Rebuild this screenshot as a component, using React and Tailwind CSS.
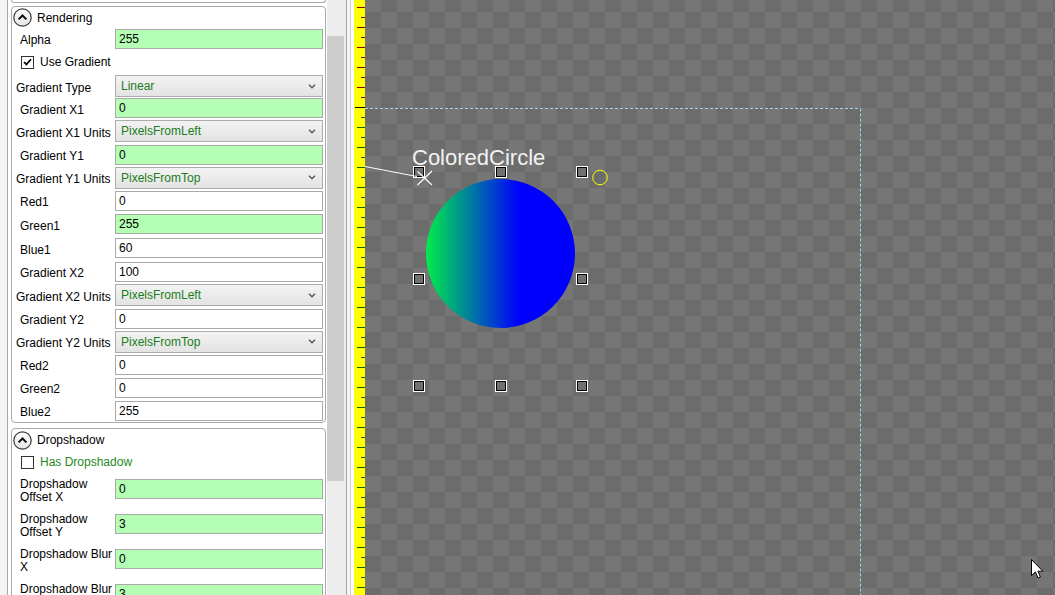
import React from "react";

function CircleChevron() {
  return (
    <svg width="19" height="19" viewBox="0 0 19 19" className="shrink-0">
      <defs>
        <linearGradient id="ccg" x1="0" y1="0" x2="0" y2="1">
          <stop offset="0" stopColor="#ffffff" />
          <stop offset="1" stopColor="#e6e6e6" />
        </linearGradient>
      </defs>
      <circle cx="9.5" cy="9.5" r="8.7" fill="url(#ccg)" stroke="#3a3a3a" strokeWidth="1.2" />
      <path d="M5.6 11.4 L9.5 7.5 L13.4 11.4" fill="none" stroke="#111" strokeWidth="2" />
    </svg>
  );
}

function Check({ checked }) {
  return (
    <span className="w-[13px] h-[13px] shrink-0 border border-[#333333] bg-white flex items-center justify-center">
      {checked && (
        <svg width="9" height="8" viewBox="0 0 9 8">
          <path d="M1 4 L3.4 6.4 L8 1.2" stroke="#000" strokeWidth="1.7" fill="none" />
        </svg>
      )}
    </span>
  );
}

function Field({ value, green }) {
  return (
    <div
      className={
        green
          ? "w-[208px] h-[20px] shrink-0 border border-[#a9a9a9] bg-[#b4ffb4] pl-[3px] flex items-center text-[12px] text-black"
          : "w-[208px] h-[20px] shrink-0 border border-[#a9a9a9] bg-white pl-[3px] flex items-center text-[12px] text-black"
      }
    >
      {value}
    </div>
  );
}

function Combo({ value }) {
  return (
    <div className="w-[208px] h-[22px] shrink-0 border border-[#acacac] bg-linear-to-b from-[#f3f3f3] to-[#e3e3e3] pl-[5px] pr-[6px] flex items-center justify-between text-[12px] text-[#1b7d1b]">
      <span>{value}</span>
      <svg width="8" height="5" viewBox="0 0 8 5">
        <path d="M1 0.8 L4 3.8 L7 0.8" stroke="#5a5a5a" strokeWidth="1.5" fill="none" />
      </svg>
    </div>
  );
}

const rows = [
  { h: "h-[21px]", label: "Alpha", value: "255", green: true },
  { h: "h-[26px]", check: true, label: "Use Gradient" },
  { h: "h-[22px]", label: "Gradient Type", combo: "Linear" },
  { h: "h-[22px]", label: "Gradient X1", value: "0", green: true },
  { h: "h-[24px]", label: "Gradient X1 Units", combo: "PixelsFromLeft" },
  { h: "h-[23px]", label: "Gradient Y1", value: "0", green: true },
  { h: "h-[23px]", label: "Gradient Y1 Units", combo: "PixelsFromTop" },
  { h: "h-[23px]", label: "Red1", value: "0" },
  { h: "h-[24px]", label: "Green1", value: "255", green: true },
  { h: "h-[24px]", label: "Blue1", value: "60" },
  { h: "h-[23px]", label: "Gradient X2", value: "100" },
  { h: "h-[24px]", label: "Gradient X2 Units", combo: "PixelsFromLeft" },
  { h: "h-[23px]", label: "Gradient Y2", value: "0" },
  { h: "h-[23px]", label: "Gradient Y2 Units", combo: "PixelsFromTop" },
  { h: "h-[23px]", label: "Red2", value: "0" },
  { h: "h-[23px]", label: "Green2", value: "0" },
  { h: "h-[23px]", label: "Blue2", value: "255" },
];

function PropRow({ r }) {
  if (r.check) {
    return (
      <div className={"flex items-center pl-[9px] gap-[6px] " + r.h}>
        <Check checked />
        <span className="text-[12px] text-black">{r.label}</span>
      </div>
    );
  }
  return (
    <div className={"flex items-center " + r.h}>
      <div
        className={
          r.combo
            ? "w-[103px] shrink-0 pl-[4px] pt-[3px] text-[12px] text-black whitespace-nowrap"
            : "w-[103px] shrink-0 pl-[8px] pt-[3px] text-[12px] text-black whitespace-nowrap"
        }
      >
        {r.label}
      </div>
      {r.combo ? <Combo value={r.combo} /> : <Field value={r.value} green={r.green} />}
    </div>
  );
}

function ShadowRow({ l1, l2, value }) {
  return (
    <div className="flex items-start h-[35px] shrink-0">
      <div className="w-[103px] shrink-0 pl-[8px] pt-[5px] text-[12px] leading-[13px] text-black whitespace-nowrap">
        {l1}
        <br />
        {l2}
      </div>
      <div className="mt-[6px]">
        <Field value={value} green />
      </div>
    </div>
  );
}

function Ruler() {
  const ticks = [];
  for (let y = 7; y < 600; y += 10) {
    const long = (y - 7) % 20 === 0;
    let color = y < 107 ? "#8b0000" : "#0b6400";
    let x1 = long ? 3 : 7;
    if (y === 107) {
      color = "#000000";
      x1 = 1;
    }
    ticks.push(<line key={y} x1={x1} x2="11" y1={y + 0.5} y2={y + 0.5} stroke={color} strokeWidth="1" />);
  }
  return (
    <svg width="11" height="595" viewBox="0 0 11 595" className="block">
      <rect x="0" y="0" width="11" height="595" fill="#ffff00" />
      {ticks}
    </svg>
  );
}

function Handle({ cx, cy }) {
  return (
    <g>
      <rect x={cx - 6} y={cy - 6} width="12" height="12" fill="#ffffff" />
      <rect x={cx - 5} y={cy - 5} width="10" height="10" fill="#000000" />
      <rect x={cx - 4} y={cy - 4} width="8" height="8" fill="#717171" />
    </g>
  );
}

export default function App() {
  const handles = [
    [54, 172], [136, 172], [217, 172],
    [54, 279], [217, 279],
    [54, 386], [136, 386], [217, 386],
  ];
  return (
    <div className="w-[1055px] h-[595px] overflow-hidden flex font-['Liberation_Sans',Arial,sans-serif] bg-[#f0f0f0]">
      {/* property panel */}
      <div className="w-[327px] h-full shrink-0 bg-[#f4f4f4] flex overflow-hidden">
        <div className="ml-[7px] flex-1 h-full border-l border-[#a8a8a8] bg-white pl-[3px] flex flex-col overflow-hidden">
          {/* previous group bottom */}
          <div className="w-[315px] h-[3px] shrink-0 border-l border-r border-b border-[#a9a9a9] rounded-b-[4px]" />
          {/* Rendering group */}
          <div className="w-[315px] mt-[3px] shrink-0 border border-[#a9a9a9] rounded-[4px] flex flex-col">
            <div className="h-[21px] flex items-center gap-[5px] pl-[1px]">
              <CircleChevron />
              <span className="text-[12px] text-black">Rendering</span>
            </div>
            {rows.map((r, i) => (
              <PropRow key={i} r={r} />
            ))}
          </div>
          {/* Dropshadow group */}
          <div className="w-[315px] mt-[5px] shrink-0 border border-[#a9a9a9] rounded-t-[4px] flex flex-col">
            <div className="h-[22px] flex items-center gap-[5px] pl-[1px]">
              <CircleChevron />
              <span className="text-[12px] text-black">Dropshadow</span>
            </div>
            <div className="h-[22px] flex items-center pl-[9px] gap-[6px]">
              <Check />
              <span className="text-[12px] text-[#1f8a1f]">Has Dropshadow</span>
            </div>
            <ShadowRow l1="Dropshadow" l2="Offset X" value="0" />
            <ShadowRow l1="Dropshadow" l2="Offset Y" value="3" />
            <ShadowRow l1="Dropshadow Blur" l2="X" value="0" />
            <ShadowRow l1="Dropshadow Blur" l2="Y" value="3" />
          </div>
        </div>
      </div>

      {/* scrollbar */}
      <div className="w-[17px] h-full shrink-0 bg-[#ededed] flex flex-col">
        <div className="h-[36px] shrink-0" />
        <div className="h-[445px] shrink-0 bg-[#cdcdcd]" />
      </div>

      {/* splitter */}
      <div className="w-[10px] h-full shrink-0 flex">
        <div className="w-[2px] bg-[#ececec]" />
        <div className="w-[1px] bg-[#a8a8a8]" />
        <div className="w-[3px] bg-[#f6f6f6]" />
        <div className="w-[1px] bg-[#cfcfcf]" />
        <div className="w-[3px] bg-white" />
      </div>

      {/* ruler */}
      <div className="w-[11px] h-full shrink-0">
        <Ruler />
      </div>

      {/* canvas */}
      <div className="relative flex-1 h-full overflow-hidden bg-[conic-gradient(#767676_25%,#6c6c6c_0_50%,#767676_0_75%,#6c6c6c_0)] bg-size-[32px_32px] bg-position-[0_12px]">
        <svg width="690" height="595" viewBox="0 0 690 595" className="absolute left-0 top-0">
          <defs>
            <linearGradient id="circGrad" gradientUnits="userSpaceOnUse" x1="54" y1="0" x2="154" y2="0">
              <stop offset="0" stopColor="#00ff3c" />
              <stop offset="1" stopColor="#0000ff" />
            </linearGradient>
          </defs>
          <line x1="0" y1="108.5" x2="495.5" y2="108.5" stroke="#9dd6ee" strokeWidth="1" strokeDasharray="3 2" />
          <line x1="495.5" y1="108.5" x2="495.5" y2="595" stroke="#9dd6ee" strokeWidth="1" strokeDasharray="3 2" />
          <circle cx="135.5" cy="253.5" r="74.5" fill="url(#circGrad)" />
          {handles.map(([x, y], i) => (
            <Handle key={i} cx={x} cy={y} />
          ))}
          <circle cx="235" cy="177.5" r="7.3" fill="none" stroke="#ffff00" strokeWidth="1" />
          <line x1="0" y1="166.5" x2="52" y2="176.5" stroke="#ffffff" strokeWidth="1" />
          <line x1="52.5" y1="171.5" x2="67" y2="185" stroke="#ffffff" strokeWidth="1.1" />
          <line x1="52.5" y1="185" x2="67" y2="171" stroke="#ffffff" strokeWidth="1.1" />
        </svg>
        <div className="absolute left-[47px] top-[147px] text-[22px] leading-[22px] text-[#f2f2f2] whitespace-nowrap">
          ColoredCircle
        </div>
        <svg width="13" height="20" viewBox="0 0 13 20" className="absolute left-[666px] top-[559px]">
          <path d="M0.5 0.5 L0.5 16.5 L4.4 12.9 L7 19 L9.4 18 L6.9 12.2 L11.8 12.2 Z" fill="#ffffff" stroke="#000000" strokeWidth="1" />
        </svg>
      </div>
    </div>
  );
}
